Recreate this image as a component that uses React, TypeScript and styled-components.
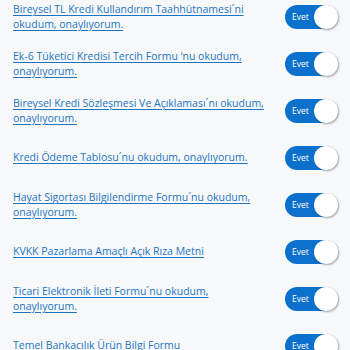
import styled, { createGlobalStyle } from "styled-components"

const GlobalStyle = createGlobalStyle`
    html, body {
        margin: 0;
        padding: 0;
        background: #f6f8fa;
    }
    body {
        font-family: "Open Sans", "Noto Sans", sans-serif;
    }
`
const List = styled.div`
    width: 350px;
    height: 350px;
    overflow: hidden;
    box-sizing: border-box;
    padding: 0 13px;
    background: #f6f8fa;
`
const Inner = styled.div`
    margin-top: -7px;
`
const Row = styled.div`
    height: 47px;
    display: flex;
    align-items: center;
    justify-content: space-between;
    gap: 12px;
`
const Label = styled.a`
    flex: 1;
    font-family: "Open Sans", "Noto Sans", sans-serif;
    font-size: 10.5px;
    line-height: 14.5px;
    color: #1f74c0;
    text-decoration: underline;
    text-underline-offset: 2px;
    text-decoration-thickness: 1px;
    cursor: pointer;
`
const Toggle = styled.div<{ on: boolean }>`
    flex: none;
    position: relative;
    width: 52px;
    height: 24px;
    border-radius: 12px;
    background: ${({ on }) => (on ? "#0b71cc" : "#c8cdd3")};
    display: flex;
    align-items: center;
    box-sizing: border-box;
    padding-left: 7px;
`
const ToggleText = styled.span`
    font-size: 8.5px;
    color: #fff;
    font-family: "Open Sans", "Noto Sans", sans-serif;
`
const Knob = styled.span`
    position: absolute;
    right: -1px;
    top: 0;
    width: 24px;
    height: 24px;
    border-radius: 50%;
    background: #fff;
    box-shadow: 1px 1px 2px rgba(0, 0, 0, 0.35);
`

const items = [
    "Bireysel TL Kredi Kullandırım Taahhütnamesi´ni okudum, onaylıyorum.",
    "Ek-6 Tüketici Kredisi Tercih Formu ‘nu okudum, onaylıyorum.",
    "Bireysel Kredi Sözleşmesi Ve Açıklaması´nı okudum, onaylıyorum.",
    "Kredi Ödeme Tablosu´nu okudum, onaylıyorum.",
    "Hayat Sigortası Bilgilendirme Formu´nu okudum, onaylıyorum.",
    "KVKK Pazarlama Amaçlı Açık Rıza Metni",
    "Ticari Elektronik İleti Formu´nu okudum, onaylıyorum.",
    "Temel Bankacılık Ürün Bilgi Formu",
]

function App() {
    return (
        <List>
            <GlobalStyle />
            <Inner>
                {items.map((text) => (
                    <Row key={text}>
                        <Label>{text}</Label>
                        <Toggle on>
                            <ToggleText>Evet</ToggleText>
                            <Knob />
                        </Toggle>
                    </Row>
                ))}
            </Inner>
        </List>
    )
}
export default App
